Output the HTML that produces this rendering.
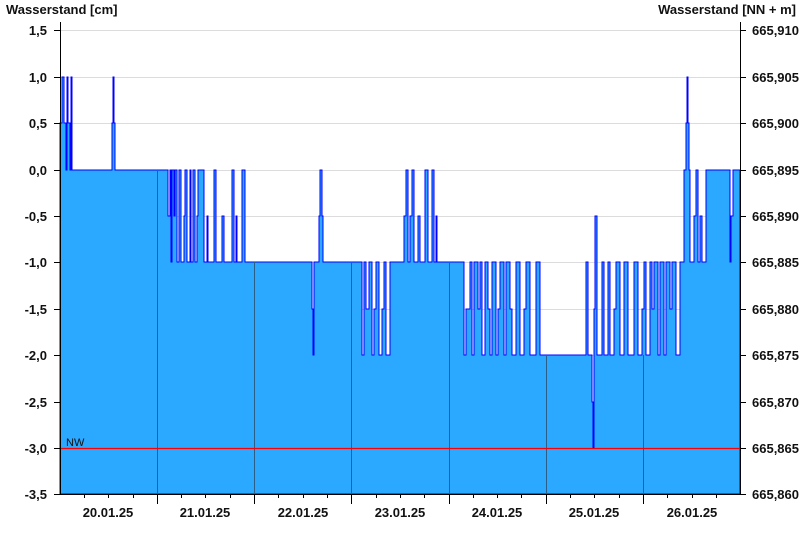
<!DOCTYPE html>
<html><head><meta charset="utf-8"><style>
html,body{margin:0;padding:0;background:#fff;width:800px;height:550px;overflow:hidden}
svg{display:block}
text{font-family:"Liberation Sans",Arial,sans-serif;font-weight:bold;font-size:13px;fill:#111}
</style></head><body>
<svg width="800" height="550" xmlns="http://www.w3.org/2000/svg">
<text x="6" y="14">Wasserstand [cm]</text>
<text x="796" y="14" text-anchor="end">Wasserstand [NN + m]</text>
<g stroke="#dcdcdc" stroke-width="1">
<line x1="60" x2="740" y1="30.5" y2="30.5"/><line x1="60" x2="740" y1="77.5" y2="77.5"/>
<line x1="60" x2="740" y1="123.5" y2="123.5"/><line x1="60" x2="740" y1="170.5" y2="170.5"/>
<line x1="60" x2="740" y1="216.5" y2="216.5"/><line x1="60" x2="740" y1="262.5" y2="262.5"/>
<line x1="60" x2="740" y1="309.5" y2="309.5"/><line x1="60" x2="740" y1="355.5" y2="355.5"/>
<line x1="60" x2="740" y1="402.5" y2="402.5"/>
</g>
<path fill="#2ba8ff" stroke="#0000ff" stroke-width="1" shape-rendering="crispEdges" d="M60,494 V123 H62 V77 H64 V123 H66 V170 H67 V77 H68 V123 H70 V170 H71 V77 H72 V170 H112 V123 H113 V77 H114 V123 H115 V170 H168 V216 H170 V170 H171 V262 H172 V170 H174 V216 H175 V170 H177 V262 H179 V170 H181 V262 H184 V216 H185 V170 H187 V262 H190 V170 H191 V262 H193 V170 H195 V262 H197 V216 H198 V170 H204 V262 H207 V216 H208 V262 H214 V170 H216 V262 H222 V216 H224 V262 H232 V170 H234 V262 H236 V216 H237 V262 H242 V170 H245 V262 H312 V309 H313 V355 H314 V262 H319 V216 H320 V170 H322 V216 H323 V262 H362 V355 H364 V262 H366 V309 H369 V262 H372 V355 H374 V309 H376 V262 H379 V355 H382 V309 H384 V262 H386 V355 H390 V262 H404 V216 H406 V170 H408 V262 H410 V216 H412 V170 H414 V262 H418 V216 H420 V262 H425 V170 H428 V262 H432 V170 H434 V262 H436 V216 H437 V262 H464 V355 H466 V309 H470 V262 H472 V355 H474 V262 H478 V309 H480 V262 H482 V355 H485 V262 H488 V309 H490 V355 H492 V262 H496 V355 H498 V309 H500 V262 H504 V355 H506 V262 H510 V309 H512 V355 H516 V262 H520 V355 H524 V309 H526 V262 H530 V355 H536 V262 H540 V355 H586 V262 H588 V355 H592 V402 H593 V448 H594 V309 H595 V216 H597 V355 H602 V262 H604 V355 H608 V262 H610 V355 H614 V309 H616 V262 H620 V355 H624 V262 H628 V355 H634 V262 H638 V355 H642 V309 H644 V262 H646 V355 H650 V262 H652 V309 H654 V262 H658 V355 H660 V262 H664 V355 H666 V262 H670 V309 H672 V262 H676 V355 H680 V262 H684 V170 H686 V123 H687 V77 H688 V123 H689 V170 H690 V262 H694 V216 H696 V170 H698 V262 H700 V216 H702 V262 H706 V170 H730 V262 H731 V216 H733 V170 H740 V494 Z"/>
<g stroke="#2a5f88" stroke-width="1">
<line x1="157.5" x2="157.5" y1="170" y2="494"/><line x1="254.5" x2="254.5" y1="262" y2="494"/>
<line x1="351.5" x2="351.5" y1="262" y2="494"/><line x1="449.5" x2="449.5" y1="262" y2="494"/>
<line x1="546.5" x2="546.5" y1="355" y2="494"/><line x1="643.5" x2="643.5" y1="355" y2="494"/>
</g>
<line x1="60" x2="740" y1="448.5" y2="448.5" stroke="#ff0000" stroke-width="1.2"/>
<text x="66" y="446" style="font-weight:normal;font-size:11px">NW</text>
<g stroke="#000" stroke-width="1">
<line x1="60.5" x2="60.5" y1="22" y2="494"/><line x1="740.5" x2="740.5" y1="22" y2="494"/>
<line x1="60" x2="741" y1="494.5" y2="494.5"/>
</g>
<g stroke="#000" stroke-width="1">
<path d="M54,30.5h6M54,77.5h6M54,123.5h6M54,170.5h6M54,216.5h6M54,262.5h6M54,309.5h6M54,355.5h6M54,402.5h6M54,448.5h6M54,494.5h6"/>
<path d="M740,30.5h6M740,77.5h6M740,123.5h6M740,170.5h6M740,216.5h6M740,262.5h6M740,309.5h6M740,355.5h6M740,402.5h6M740,448.5h6M740,494.5h6"/>
<path d="M157.5,494v10M254.5,494v10M351.5,494v10M449.5,494v10M546.5,494v10M643.5,494v10"/>
<path d="M84.5,494v4M108.5,494v4M133.5,494v4M181.5,494v4M205.5,494v4M230.5,494v4M278.5,494v4M303.5,494v4M327.5,494v4M376.5,494v4M400.5,494v4M424.5,494v4M473.5,494v4M497.5,494v4M521.5,494v4M570.5,494v4M594.5,494v4M619.5,494v4M667.5,494v4M692.5,494v4M716.5,494v4"/>
</g>
<g text-anchor="end">
<text x="47" y="35">1,5</text><text x="47" y="82">1,0</text><text x="47" y="128">0,5</text>
<text x="47" y="175">0,0</text><text x="47" y="221">-0,5</text><text x="47" y="267">-1,0</text>
<text x="47" y="314">-1,5</text><text x="47" y="360">-2,0</text><text x="47" y="407">-2,5</text>
<text x="47" y="453">-3,0</text><text x="47" y="499">-3,5</text>
</g>
<g>
<text x="752" y="35">665,910</text><text x="752" y="82">665,905</text><text x="752" y="128">665,900</text>
<text x="752" y="175">665,895</text><text x="752" y="221">665,890</text><text x="752" y="267">665,885</text>
<text x="752" y="314">665,880</text><text x="752" y="360">665,875</text><text x="752" y="407">665,870</text>
<text x="752" y="453">665,865</text><text x="752" y="499">665,860</text>
</g>
<g text-anchor="middle">
<text x="108" y="517">20.01.25</text><text x="205" y="517">21.01.25</text><text x="303" y="517">22.01.25</text>
<text x="400" y="517">23.01.25</text><text x="497" y="517">24.01.25</text><text x="594" y="517">25.01.25</text>
<text x="692" y="517">26.01.25</text>
</g>
</svg>
</body></html>
